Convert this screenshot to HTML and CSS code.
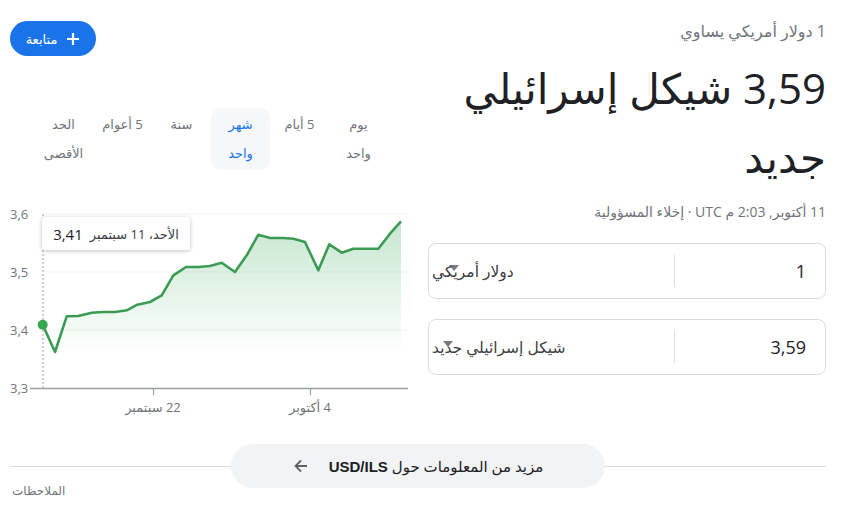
FILE: index.html
```html
<!DOCTYPE html>
<html lang="ar" dir="rtl">
<head>
<meta charset="utf-8">
<link rel="stylesheet" href="styles.css">
</head>
<body>
<div class="page">
  <div class="columns">
    <div class="col-main">
      <div class="subtitle">1 دولار أمريكي يساوي</div>
      <div class="big">3,59 شيكل إسرائيلي جديد</div>
      <div class="meta">11 أكتوبر, 2:03 م UTC · إخلاء المسؤولية</div>
      <div class="conv">
        <div class="conv-num">1</div>
        <div class="conv-sep"></div>
        <div class="conv-sel"><span class="sel-text">دولار أمريكي</span><span class="sel-arrow a1"></span></div>
      </div>
      <div class="conv">
        <div class="conv-num">3,59</div>
        <div class="conv-sep"></div>
        <div class="conv-sel"><span class="sel-text">شيكل إسرائيلي جديد</span><span class="sel-arrow a2"></span></div>
      </div>
    </div>
    <div class="col-chart">
      <div class="follow-row">
        <button class="follow">
          <svg width="14" height="14" viewBox="0 0 14 14"><path d="M7 1v12M1 7h12" stroke="#fff" stroke-width="2.2" fill="none"/></svg>
          <span>متابعة</span>
        </button>
      </div>
      <div class="tabs">
        <div class="tab">يوم واحد</div>
        <div class="tab">5 أيام</div>
        <div class="tab active">شهر واحد</div>
        <div class="tab">سنة</div>
        <div class="tab">5 أعوام</div>
        <div class="tab">الحد الأقصى</div>
      </div>
      <div class="chart">
        <svg class="chart-svg" width="398" height="220" viewBox="10 200 398 220">
          <defs>
            <linearGradient id="g" x1="0" y1="0" x2="0" y2="1">
              <stop offset="0" stop-color="#34a853" stop-opacity="0.28"/>
              <stop offset="1" stop-color="#34a853" stop-opacity="0"/>
            </linearGradient>
          </defs>
          <g stroke="#f1f3f4" stroke-width="1">
            <line x1="43" y1="212" x2="408" y2="212"/>
            <line x1="43" y1="270" x2="408" y2="270"/>
            <line x1="43" y1="328" x2="408" y2="328"/>
          </g>
          <polygon fill="url(#g)" points="42.7,322.7 55,350 66.7,314.3 78.3,314 91.7,310.7 103,310 115,310 126.7,308.3 137.3,302.7 150,300 161.7,293.3 173.3,273.3 186,265 198.3,265 210,264 221.7,260.7 235,270 246.7,253.3 258.3,232.7 270,236 283.3,236 293.3,236.7 305,240 318.3,268.3 329.3,242.3 341.7,250.7 353.3,246.7 366.7,246.7 378.3,246.7 390,231.7 401,219.3 401,353 55,353"/>
          <line x1="43" y1="212" x2="43" y2="386" stroke="#9aa0a6" stroke-width="1" stroke-dasharray="2 2"/>
          <polyline fill="none" stroke="#3c9b53" stroke-width="2.6" stroke-linejoin="round" points="42.7,322.7 55,350 66.7,314.3 78.3,314 91.7,310.7 103,310 115,310 126.7,308.3 137.3,302.7 150,300 161.7,293.3 173.3,273.3 186,265 198.3,265 210,264 221.7,260.7 235,270 246.7,253.3 258.3,232.7 270,236 283.3,236 293.3,236.7 305,240 318.3,268.3 329.3,242.3 341.7,250.7 353.3,246.7 366.7,246.7 378.3,246.7 390,231.7 401,219.3"/>
          <circle cx="42.7" cy="322.7" r="5" fill="#34a853"/>
          <line x1="30" y1="386.5" x2="408" y2="386.5" stroke="#9aa0a6" stroke-width="1.5"/>
          <line x1="153.5" y1="386" x2="153.5" y2="393" stroke="#9aa0a6" stroke-width="1.2"/>
          <line x1="310.5" y1="386" x2="310.5" y2="393" stroke="#9aa0a6" stroke-width="1.2"/>
          <g class="ylab" text-anchor="start" direction="ltr">
            <text x="10" y="217">3,6</text>
            <text x="10" y="275">3,5</text>
            <text x="10" y="333">3,4</text>
            <text x="10" y="391">3,3</text>
          </g>
          <g class="xlab" text-anchor="middle">
            <text x="153" y="410">22 سبتمبر</text>
            <text x="310" y="410">4 أكتوبر</text>
          </g>
        </svg>
        <div class="tooltip"><span class="tt-date">الأحد، 11 سبتمبر</span><span class="tt-val">3,41</span></div>
      </div>
    </div>
  </div>
  <div class="more">
    <div class="more-line"></div>
    <button class="more-btn">
      <span>مزيد من المعلومات حول <b>USD/ILS</b></span>
      <svg width="16" height="16" viewBox="0 0 16 16"><path d="M14 8H2.5M8 2.5L2.5 8 8 13.5" stroke="#5f6368" stroke-width="1.8" fill="none"/></svg>
    </button>
  </div>
  <div class="notes">الملاحظات</div>
</div>
</body>
</html>
```
FILE: styles.css
```css
html, body {
  margin: 0;
  padding: 0;
  background: #fff;
}
body {
  font-family: "Open Sans", "Noto Sans", "DejaVu Sans", sans-serif;
  color: #202124;
}
.page {
  padding: 0 31px 0 10px;
}
.columns {
  display: flex;
  gap: 20px;
}
.col-main {
  width: 398px;
  padding-top: 21px;
}
.col-chart {
  width: 398px;
}
.subtitle {
  font-size: 16px;
  line-height: 20px;
  color: #70757a;
}
.big {
  margin-top: 12px;
  max-width: 385px;
  font-size: 42px;
  line-height: 69px;
  color: #202124;
}
.meta {
  margin-top: 12px;
  font-size: 14px;
  line-height: 18px;
  color: #70757a;
}
.conv {
  margin-top: 22px;
  height: 56px;
  box-sizing: border-box;
  border: 1px solid #dadce0;
  border-radius: 8px;
  display: flex;
  align-items: center;
}
.conv + .conv {
  margin-top: 20px;
}
.conv-num {
  width: 150px;
  box-sizing: border-box;
  padding-right: 19px;
  font-size: 18px;
  color: #202124;
}
.conv-sep {
  width: 1px;
  height: 32px;
  background: #dadce0;
}
.conv-sel {
  flex: 1;
  position: relative;
  display: flex;
  justify-content: flex-end;
  padding-left: 3px;
  font-size: 15.5px;
  color: #3c4043;
}
.sel-arrow {
  position: absolute;
  width: 0;
  height: 0;
  border-left: 5px solid transparent;
  border-right: 5px solid transparent;
  border-top: 6px solid rgba(95, 99, 104, 0.85);
}
.a1 { left: 20px; top: 5px; }
.a2 { left: 14px; top: 5px; }
.follow-row {
  padding-top: 21px;
  display: flex;
  justify-content: flex-end;
}
.follow {
  height: 35px;
  width: 86px;
  border: none;
  border-radius: 18px;
  background: #1a73e8;
  color: #fff;
  display: flex;
  align-items: center;
  justify-content: center;
  gap: 9px;
  font-family: inherit;
  font-size: 13px;
  padding: 0;
}
.tabs {
  margin-top: 52px;
  display: flex;
  padding-right: 20px;
}
.tab {
  width: 59px;
  box-sizing: border-box;
  padding: 2px 7px;
  text-align: center;
  font-size: 13px;
  line-height: 29px;
  color: #70757a;
  border-radius: 10px;
}
.tab.active {
  color: #1a73e8;
  background: #f5f7f9;
}
.chart {
  position: relative;
  margin-top: 32px;
  height: 220px;
}
.chart-svg {
  display: block;
}
.ylab text, .xlab text {
  font-family: "Open Sans", "Noto Sans", "DejaVu Sans", sans-serif;
  font-size: 13px;
  fill: #70757a;
}
.tooltip {
  position: absolute;
  left: 32px;
  top: 15px;
  width: 148px;
  height: 33px;
  box-sizing: border-box;
  background: #fff;
  border-radius: 3px;
  box-shadow: 0 1px 4px rgba(0, 0, 0, 0.25);
  display: flex;
  align-items: center;
  justify-content: center;
  gap: 7px;
}
.tt-date {
  font-size: 13px;
  color: #3c4043;
}
.tt-val {
  font-size: 15px;
  color: #202124;
}
.more {
  position: relative;
  margin-top: 44px;
  height: 1px;
}
.more-line {
  height: 1px;
  background: #dadce0;
}
.more-btn {
  position: absolute;
  left: 50%;
  top: -22px;
  transform: translateX(-50%);
  width: 374px;
  height: 44px;
  border: none;
  border-radius: 22px;
  background: #f1f3f4;
  display: flex;
  align-items: center;
  justify-content: center;
  gap: 20px;
  font-family: inherit;
  font-size: 15px;
  color: #202124;
  padding: 0;
}
.more-btn b {
  font-family: "Liberation Sans", Arial, sans-serif;
  font-weight: 700;
}
.notes {
  margin-top: 16px;
  text-align: left;
  padding-left: 2px;
  font-size: 12px;
  line-height: 16px;
  color: #70757a;
}
```
